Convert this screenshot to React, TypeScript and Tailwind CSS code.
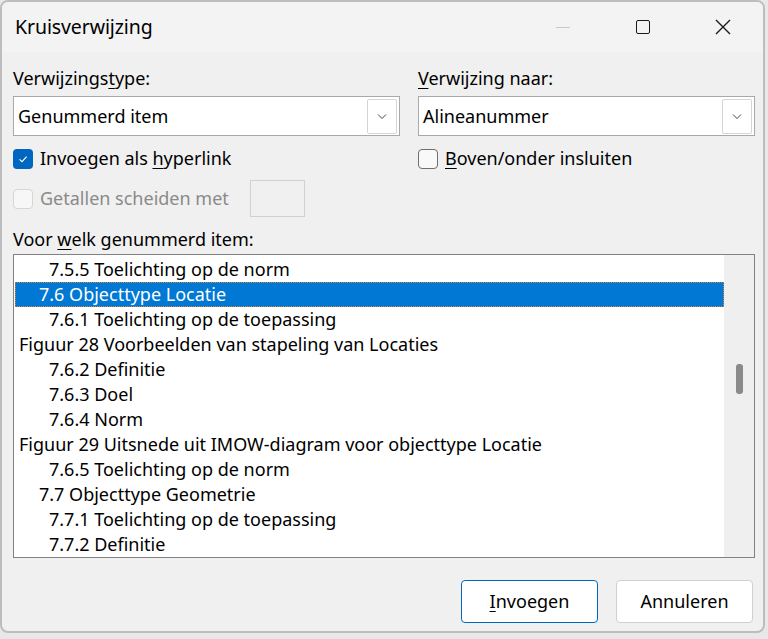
import React from "react";

const ITEMS: { text: string; indent: number; selected?: boolean }[] = [
  { text: "7.5.5 Toelichting op de norm", indent: 34 },
  { text: "7.6 Objecttype Locatie", indent: 24, selected: true },
  { text: "7.6.1 Toelichting op de toepassing", indent: 34 },
  { text: "Figuur 28 Voorbeelden van stapeling van Locaties", indent: 4 },
  { text: "7.6.2 Definitie", indent: 34 },
  { text: "7.6.3 Doel", indent: 34 },
  { text: "7.6.4 Norm", indent: 34 },
  { text: "Figuur 29 Uitsnede uit IMOW-diagram voor objecttype Locatie", indent: 4 },
  { text: "7.6.5 Toelichting op de norm", indent: 34 },
  { text: "7.7 Objecttype Geometrie", indent: 24 },
  { text: "7.7.1 Toelichting op de toepassing", indent: 34 },
  { text: "7.7.2 Definitie", indent: 34 },
];

function Chevron() {
  return (
    <svg width="12" height="12" viewBox="0 0 12 12" fill="none">
      <path d="M2 4.5 L6 8.5 L10 4.5" stroke="#444" strokeWidth="1" />
    </svg>
  );
}

function Combo({ value }: { value: string }) {
  return (
    <div className="flex h-[40px] items-center border border-[#a9a9a9] bg-white pl-[4px] pr-[2px]">
      <span className="flex-1">{value}</span>
      <div className="flex h-[35px] w-[30px] items-center justify-center rounded-[2px] border border-[#d5d5d5] bg-white">
        <Chevron />
      </div>
    </div>
  );
}

function Check({ checked, disabled }: { checked?: boolean; disabled?: boolean }) {
  if (checked)
    return (
      <div className="flex h-[20px] w-[20px] shrink-0 items-center justify-center rounded-[4px] bg-[#0067c0]">
        <svg width="12" height="12" viewBox="0 0 12 12" fill="none">
          <path d="M2.5 6.3 L5 8.6 L9.6 3.6" stroke="white" strokeWidth="1.1" />
        </svg>
      </div>
    );
  return (
    <div
      className={
        disabled
          ? "h-[20px] w-[20px] shrink-0 rounded-[4px] border border-[#d6d6d6] bg-[#f7f7f7]"
          : "h-[20px] w-[20px] shrink-0 rounded-[4px] border border-[#6f6f6f] bg-[#f9f9f9]"
      }
    />
  );
}

export default function App() {
  return (
    <div
      className="relative h-[639px] w-[768px] overflow-hidden bg-[#e8e8e8]"
      style={{ fontFamily: '"Noto Sans", "Open Sans", sans-serif' }}
    >
      <div className="flex h-[633px] w-[765px] flex-col overflow-hidden rounded-[8px] border-2 border-[#bdbdbd] bg-[#f0f0f0] text-[18px] text-black">
        {/* title bar */}
        <div className="flex h-[50px] shrink-0 items-center bg-[#f3f3f3]">
          <span className="pl-[13px] text-[19.5px] tracking-[-0.1px]">Kruisverwijzing</span>
          <div className="ml-auto flex h-full items-center">
            <div className="flex w-[80px] justify-center">
              <div className="h-px w-[14px] bg-[#c8c8c8]" />
            </div>
            <div className="flex w-[80px] justify-center">
              <div className="h-[14px] w-[14px] rounded-[2px] border-[1.5px] border-[#1a1a1a]" />
            </div>
            <div className="flex w-[80px] justify-center">
              <svg width="16" height="16" viewBox="0 0 16 16">
                <path d="M1 1 L15 15 M15 1 L1 15" stroke="#1a1a1a" strokeWidth="1.4" />
              </svg>
            </div>
          </div>
        </div>

        {/* body */}
        <div className="flex flex-1 flex-col px-[11px] pt-[14px]">
          <div className="grid grid-cols-[387px_337px] gap-x-[18px]">
            <div className="flex flex-col">
              <span className="h-[30px] leading-[24px]">
                Verwijzings<span className="underline underline-offset-[3px]">t</span>ype:
              </span>
              <Combo value="Genummerd item" />
              <label className="mt-[10px] flex h-[25px] items-center gap-[7px]">
                <Check checked />
                <span>
                  Invoegen als <span className="underline underline-offset-[3px]">h</span>yperlink
                </span>
              </label>
              <div className="mt-[9px] flex items-center">
                <Check disabled />
                <span className="ml-[7px] text-[#8a8a8a]">Getallen scheiden met</span>
                <div className="ml-[21px] h-[37px] w-[55px] border border-[#d0d0d0] bg-[#f0f0f0]" />
              </div>
            </div>
            <div className="flex flex-col">
              <span className="h-[30px] leading-[24px]">
                <span className="underline underline-offset-[3px]">V</span>erwijzing naar:
              </span>
              <Combo value="Alineanummer" />
              <label className="mt-[10px] flex h-[25px] items-center gap-[7px]">
                <Check />
                <span>
                  <span className="underline underline-offset-[3px]">B</span>oven/onder insluiten
                </span>
              </label>
            </div>
          </div>

          <span className="mt-[10px] h-[27px] leading-[24px]">
            Voor <span className="underline underline-offset-[3px]">w</span>elk genummerd item:
          </span>

          <div className="flex h-[304px] w-[742px] shrink-0 border border-[#828282] bg-white">
            <div className="flex flex-1 flex-col pt-[2px] pl-[1px]">
              {ITEMS.map((it) => (
                <div
                  key={it.text}
                  className={
                    it.selected
                      ? "flex h-[25px] items-center border border-dotted border-[#d9862b] bg-[#0078d4] text-white"
                      : "flex h-[25px] items-center"
                  }
                  style={{ paddingLeft: it.indent - (it.selected ? 1 : 0) }}
                >
                  <span className="whitespace-nowrap">{it.text}</span>
                </div>
              ))}
            </div>
            <div className="flex w-[30px] flex-col items-center bg-[#efefef]">
              <div className="mt-[109px] h-[30px] w-[7px] rounded-[3px] bg-[#8a8a8a]" />
            </div>
          </div>

          <div className="mt-[22px] mr-[-1px] flex justify-end gap-[18px]">
            <button className="h-[43px] w-[137px] rounded-[4px] border border-[#0067c0] bg-white">
              <span className="underline underline-offset-[3px]">I</span>nvoegen
            </button>
            <button className="h-[43px] w-[137px] rounded-[4px] border border-[#d0d0d0] bg-white">
              Annuleren
            </button>
          </div>
        </div>
      </div>
      <div className="absolute left-[14px] top-[633px] text-[18px] text-black">
        Toelichting op de norm van objecttype GNW en zoals die uitgewerkt
      </div>
    </div>
  );
}
